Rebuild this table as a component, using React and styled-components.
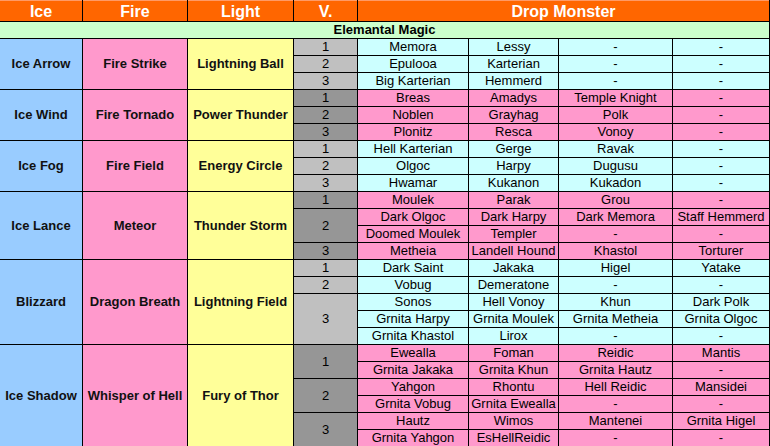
import React from 'react';
import styled, { createGlobalStyle } from 'styled-components';

const GlobalStyle = createGlobalStyle`
  html, body {
    margin: 0;
    padding: 0;
    background: #ffffff;
  }
  body {
    font-family: "Liberation Sans", Arial, sans-serif;
  }
`;

const groups = [
  {
    ice: 'Ice Arrow', fire: 'Fire Strike', light: 'Lightning Ball', dark: false,
    levels: [
      [['Memora', 'Lessy', '-', '-']],
      [['Epulooa', 'Karterian', '-', '-']],
      [['Big Karterian', 'Hemmerd', '-', '-']],
    ],
  },
  {
    ice: 'Ice Wind', fire: 'Fire Tornado', light: 'Power Thunder', dark: true,
    levels: [
      [['Breas', 'Amadys', 'Temple Knight', '-']],
      [['Noblen', 'Grayhag', 'Polk', '-']],
      [['Plonitz', 'Resca', 'Vonoy', '-']],
    ],
  },
  {
    ice: 'Ice Fog', fire: 'Fire Field', light: 'Energy Circle', dark: false,
    levels: [
      [['Hell Karterian', 'Gerge', 'Ravak', '-']],
      [['Olgoc', 'Harpy', 'Dugusu', '-']],
      [['Hwamar', 'Kukanon', 'Kukadon', '-']],
    ],
  },
  {
    ice: 'Ice Lance', fire: 'Meteor', light: 'Thunder Storm', dark: true,
    levels: [
      [['Moulek', 'Parak', 'Grou', '-']],
      [
        ['Dark Olgoc', 'Dark Harpy', 'Dark Memora', 'Staff Hemmerd'],
        ['Doomed Moulek', 'Templer', '-', '-'],
      ],
      [['Metheia', 'Landell Hound', 'Khastol', 'Torturer']],
    ],
  },
  {
    ice: 'Blizzard', fire: 'Dragon Breath', light: 'Lightning Field', dark: false,
    levels: [
      [['Dark Saint', 'Jakaka', 'Higel', 'Yatake']],
      [['Vobug', 'Demeratone', '-', '-']],
      [
        ['Sonos', 'Hell Vonoy', 'Khun', 'Dark Polk'],
        ['Grnita Harpy', 'Grnita Moulek', 'Grnita Metheia', 'Grnita Olgoc'],
        ['Grnita Khastol', 'Lirox', '-', '-'],
      ],
    ],
  },
  {
    ice: 'Ice Shadow', fire: 'Whisper of Hell', light: 'Fury of Thor', dark: true,
    levels: [
      [
        ['Ewealla', 'Foman', 'Reidic', 'Mantis'],
        ['Grnita Jakaka', 'Grnita Khun', 'Grnita Hautz', '-'],
      ],
      [
        ['Yahgon', 'Rhontu', 'Hell Reidic', 'Mansidei'],
        ['Grnita Vobug', 'Grnita Ewealla', '-', '-'],
      ],
      [
        ['Hautz', 'Wimos', 'Mantenei', 'Grnita Higel'],
        ['Grnita Yahgon', 'EsHellReidic', '-', '-'],
      ],
    ],
  },
];

const Sheet = styled.div`
  width: 770px;
  height: 446px;
  overflow: hidden;
  box-sizing: border-box;
`;

const Grid = styled.div`
  display: grid;
  grid-template-columns: 82px 104px 105px 63px 110px 89px 113px 96px;
  grid-template-rows: 21px 16px;
  grid-auto-rows: 16px;
  gap: 1px;
  padding-right: 1px;
  background: #000000;
  width: 770px;
  box-sizing: border-box;
`;

const Cell = styled.div`
  display: flex;
  align-items: center;
  justify-content: center;
  white-space: nowrap;
  overflow: hidden;
  font-size: 13px;
  line-height: 16px;
  color: #000000;
  grid-row: span ${(p) => p.$span || 1};
`;

const HeadCell = styled(Cell)`
  background: #ff6600;
  color: #ffffff;
  font-weight: bold;
  font-size: 16px;
  line-height: 21px;
  border-top: 1px solid #ff9a66;
  box-sizing: border-box;
  grid-column: span ${(p) => p.$cols || 1};
`;

const TitleCell = styled(Cell)`
  grid-column: 1 / -1;
  background: #ccffcc;
  font-weight: bold;
`;

const labelColors = {
  ice: '#99ccff',
  fire: '#ff99cc',
  light: '#ffff99',
};

const LabelCell = styled(Cell)`
  background: ${(p) => labelColors[p.$kind]};
  font-weight: bold;
  color: #111111;
`;

const LevelCell = styled(Cell)`
  background: ${(p) => (p.$dark ? '#969696' : '#c0c0c0')};
`;

const MonsterCell = styled(Cell)`
  background: ${(p) => (p.$dark ? '#ff99cc' : '#ccffff')};
`;

function Group({ group }) {
  const total = group.levels.reduce((n, l) => n + l.length, 0);
  const cells = [
    <LabelCell key="ice" $kind="ice" $span={total}>{group.ice}</LabelCell>,
    <LabelCell key="fire" $kind="fire" $span={total}>{group.fire}</LabelCell>,
    <LabelCell key="light" $kind="light" $span={total}>{group.light}</LabelCell>,
  ];
  group.levels.forEach((rows, li) => {
    cells.push(
      <LevelCell key={`lv${li}`} $dark={group.dark} $span={rows.length}>
        {li + 1}
      </LevelCell>
    );
    rows.forEach((row, ri) => {
      row.forEach((name, ci) => {
        cells.push(
          <MonsterCell key={`m${li}-${ri}-${ci}`} $dark={group.dark}>
            {name}
          </MonsterCell>
        );
      });
    });
  });
  return cells;
}

export default function App() {
  return (
    <>
      <GlobalStyle />
      <Sheet>
        <Grid>
          <HeadCell>Ice</HeadCell>
          <HeadCell>Fire</HeadCell>
          <HeadCell>Light</HeadCell>
          <HeadCell>V.</HeadCell>
          <HeadCell $cols={4}>Drop Monster</HeadCell>
          <TitleCell>Elemantal Magic</TitleCell>
          {groups.map((g) => Group({ group: g }))}
        </Grid>
      </Sheet>
    </>
  );
}
